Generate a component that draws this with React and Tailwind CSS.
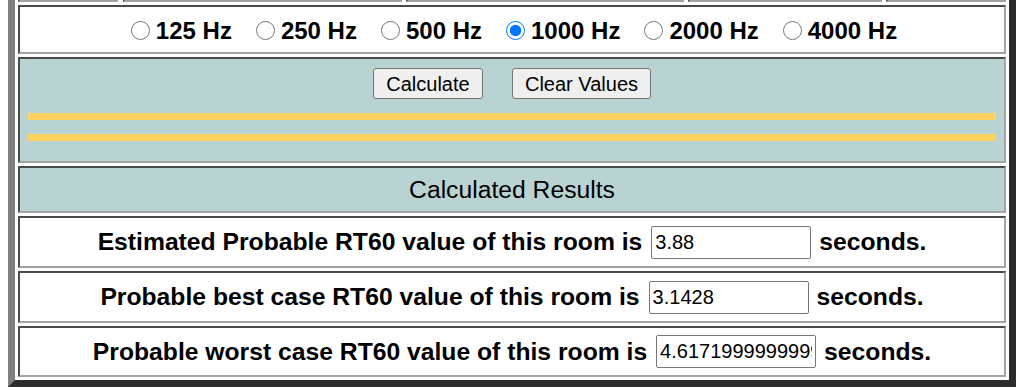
import { useState } from 'react';

const cell =
  'border-2 border-t-[#4a4a4a] border-l-[#4a4a4a] border-r-[#a3a3a3] border-b-[#a3a3a3]';

const freqs = ['125', '250', '500', '1000', '2000', '4000'];

const results = [
  { label: 'Estimated Probable RT60 value of this room is', value: '3.88', h: 'h-[52px]' },
  { label: 'Probable best case RT60 value of this room is', value: '3.1428', h: 'h-[52px]' },
  { label: 'Probable worst case RT60 value of this room is', value: '4.6171999999999995', h: 'h-[51px]' },
];

const App = () => {
  const [freq, setFreq] = useState('1000');

  return (
    <div className="h-[390px] overflow-hidden bg-white font-['Liberation_Sans',Arial,sans-serif] text-black">
      <div className="ml-[8px] mt-[-30px] w-[1008px] border-[7px] border-t-[#808080] border-l-[#808080] border-r-[#2b2b2b] border-b-[#2b2b2b] p-[3px] flex flex-col gap-[3px]">
        {/* partly hidden row from above */}
        <div className="flex h-[22px] gap-[4px]">
          <div className={`${cell} w-[100px] mr-[1px] bg-white`} />
          <div className={`${cell} w-[279px] bg-white`} />
          <div className={`${cell} w-[278px] bg-white`} />
          <div className={`${cell} w-[194px] bg-white`} />
          <div className={`${cell} flex-1 bg-white`} />
        </div>

        {/* frequency choice */}
        <div className={`${cell} h-[49px] bg-white flex items-center justify-center gap-[24px] pt-[2px] pl-[4px]`}>
          {freqs.map((f) => (
            <label key={f} className="flex items-center gap-[6px] text-[24px] font-bold leading-none">
              <input
                type="radio"
                name="freq"
                checked={freq === f}
                onChange={() => setFreq(f)}
                className="m-0 w-[19px] h-[19px] accent-[#0075ff]"
              />
              {f} Hz
            </label>
          ))}
        </div>

        {/* buttons */}
        <div className={`${cell} h-[106px] bg-[#b9d3d3] flex flex-col`}>
          <div className="flex justify-center gap-[29px] pt-[9px]">
            <button className="h-[31px] w-[110px] bg-[#efefef] border border-[#767676] rounded-[3px] text-[20px] leading-none">
              Calculate
            </button>
            <button className="h-[31px] w-[139px] bg-[#efefef] border border-[#767676] rounded-[3px] text-[20px] leading-none">
              Clear Values
            </button>
          </div>
          <div className="mx-[8px] mt-[14px] h-[7px] bg-[#fed25e]" />
          <div className="mx-[8px] mt-[14px] h-[7px] bg-[#fed25e]" />
        </div>

        {/* results header */}
        <div className={`${cell} h-[47px] bg-[#b9d3d3] flex items-center justify-center text-[24.7px]`}>
          Calculated Results
        </div>

        {results.map((r) => (
          <div key={r.label} className={`${cell} ${r.h} bg-white flex items-center justify-center text-[24.7px] font-bold`}>
            <span>{r.label}</span>
            <input
              type="text"
              readOnly
              value={r.value}
              className="ml-[9px] mr-[8px] w-[160px] h-[33px] border border-[#767676] rounded-[2px] px-[3px] text-[20px] font-normal text-black bg-white"
            />
            <span>seconds.</span>
          </div>
        ))}
      </div>
    </div>
  );
};

export default App;
